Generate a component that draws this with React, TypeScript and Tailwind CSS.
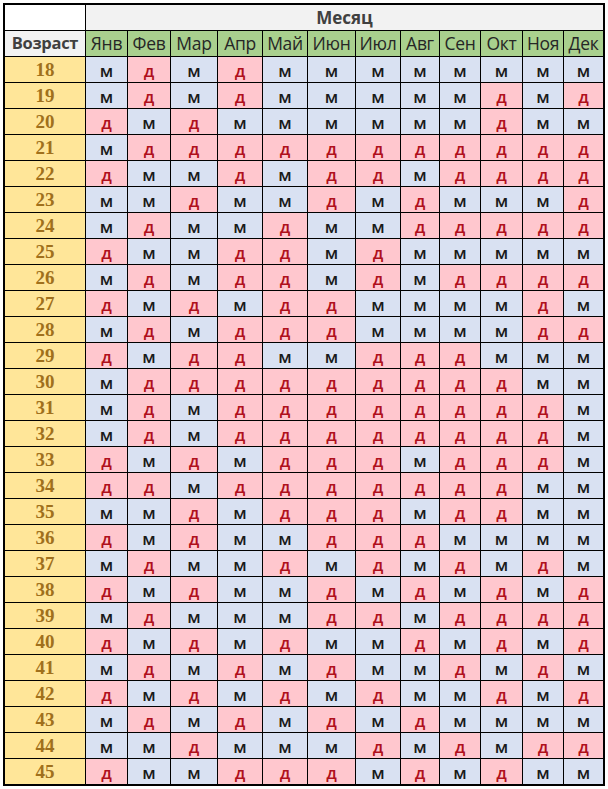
import React from "react";

const months = ["Янв", "Фев", "Мар", "Апр", "Май", "Июн", "Июл", "Авг", "Сен", "Окт", "Ноя", "Дек"];

const data: string[] = [
  "МДМДММММММММ",
  "МДМДМММММДМД",
  "ДМДММММММДММ",
  "МДДДДДДДДДДД",
  "ДММДМДДМДДДД",
  "ММДММДМДМММД",
  "МДММДММДДДДД",
  "ДММДДМДМММММ",
  "МДМДДМДМДДДД",
  "ДМДМДДММММДМ",
  "МДМДДДММММДД",
  "ДМДДММДДДМММ",
  "МДДДДДДДДДММ",
  "МДМДДДДДДДДМ",
  "МДМДДДДДДДДМ",
  "ДМДМДДДМДДДМ",
  "ДДМДДДДДДДММ",
  "ММДМДДДМДДММ",
  "ДМДММДДДММММ",
  "МДММДМДМДМДМ",
  "ДМДММДМДМДМД",
  "МДМММДДМДДДД",
  "ДМДМДММДМДМД",
  "МДМДМДММДМДМ",
  "ДМДМДМДММДМД",
  "МДМДМДМДММММ",
  "ММДМММДМДМДД",
  "ДММДДДМДМДММ",
];

const sans = { fontFamily: '"Open Sans", "Noto Sans", "DejaVu Sans", sans-serif' };
const serif = { fontFamily: '"Liberation Serif", "DejaVu Serif", serif' };

export default function App() {
  return (
    <div className="w-[608px] h-[789px] bg-white pt-[3px] pl-[3px]" style={sans}>
      <div
        className="grid w-[602px] border-2 border-black bg-black gap-px grid-cols-[80px_41px_42px_46px_44px_44px_47px_44px_38px_40px_41px_40px_39px] auto-rows-[25px]"
      >
        <div className="bg-white" />
        <div className="col-span-12 bg-[#f2f2f2] flex items-center justify-center text-[17px] font-bold text-[#404040] leading-none">
          Месяц
        </div>
        <div className="bg-[#f2f2f2] flex items-center justify-center text-[16.5px] font-bold text-[#404040] leading-none tracking-[-0.3px]">
          Возраст
        </div>
        {months.map((m) => (
          <div
            key={m}
            className="bg-[#a9d08e] flex items-center justify-center text-[17.5px] text-[#262626] leading-none tracking-[-0.3px]"
          >
            {m}
          </div>
        ))}
        {data.map((row, i) => (
          <React.Fragment key={i}>
            <div
              className="bg-[#ffe699] flex items-center justify-center text-[19px] font-bold text-[#a0701c] leading-none"
              style={serif}
            >
              {18 + i}
            </div>
            {row.split("").map((c, j) =>
              c === "М" ? (
                <div
                  key={j}
                  className="bg-[#d9e1f2] flex items-center justify-center text-[17px] font-semibold text-[#1a1a1a] leading-none pt-[1px]"
                >
                  м
                </div>
              ) : (
                <div
                  key={j}
                  className="bg-[#ffc7ce] flex items-center justify-center text-[17px] font-semibold text-[#b0101c] leading-none pt-[2px]"
                >
                  д
                </div>
              )
            )}
          </React.Fragment>
        ))}
      </div>
    </div>
  );
}
